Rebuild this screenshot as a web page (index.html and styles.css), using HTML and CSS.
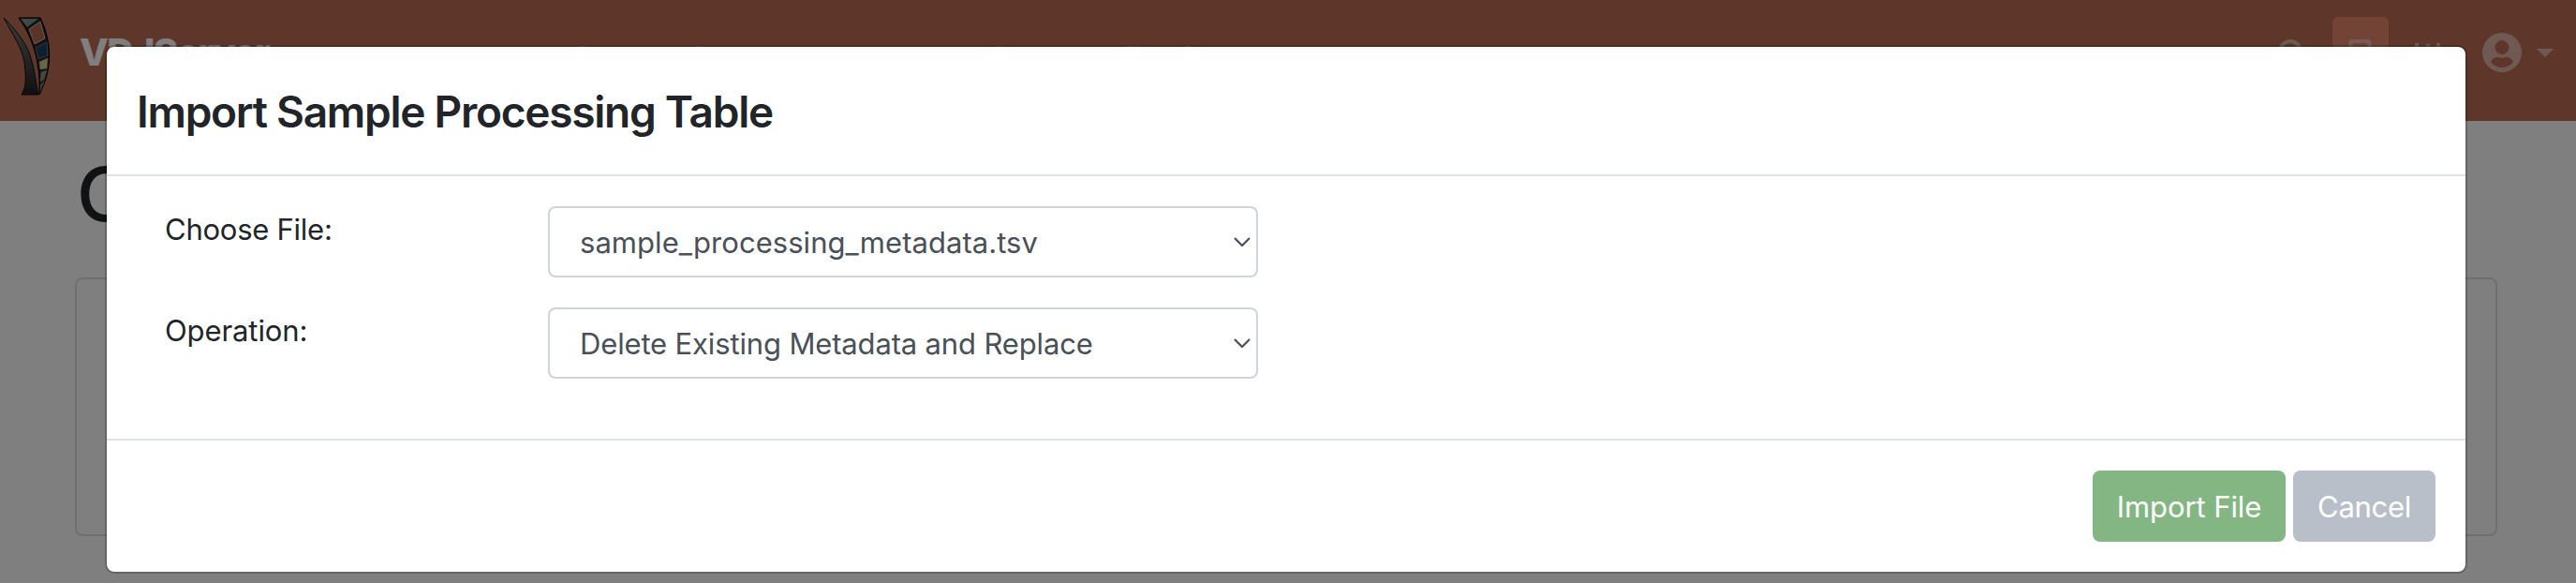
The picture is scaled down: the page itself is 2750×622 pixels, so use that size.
FILE: index.html
```html
<!DOCTYPE html>
<html lang="en">
<head>
<meta charset="utf-8">
<title>VDJServer</title>
<link rel="stylesheet" href="styles.css">
</head>
<body>
<div class="page">
  <header class="navbar">
    <svg class="logo" width="54" height="110" viewBox="0 0 54 110">
      <defs><linearGradient id="horn" x1="0" y1="0" x2="0" y2="1"><stop offset="0" stop-color="#777"/><stop offset=".4" stop-color="#555"/><stop offset="1" stop-color="#251f21"/></linearGradient></defs>
      <path d="M4 19C14 29 26 43 31 56C36 69 38 84 41 101H23C26 95 28 91 27 76C26 54 17 43 4 19Z" fill="url(#horn)" stroke="#111" stroke-width="1"/>
      <path d="M20 19H43C55 44 57 72 42 101C43 72 38 44 20 19Z" fill="#222" stroke="#000" stroke-width="1"/>
      <path d="M22 20H41L29 29Z" fill="#7a9688"/>
      <path d="M31 31L43 23L48 41L37 47Z" fill="#b4664c" stroke="#c9c0bb" stroke-width="1"/>
      <path d="M38 51L50 45L51 59L41 63Z" fill="#1d4058" stroke="#889" stroke-width=".7"/>
      <path d="M42 66L51 62L50 73L43 74Z" fill="#d8cc80" stroke="#a99" stroke-width=".7"/>
      <path d="M44 77L50 75L47 85L43 87Z" fill="#7a9688" stroke="#988" stroke-width=".6"/>
      <path d="M43 90L48 86L43 98Z" fill="#777"/>
    </svg>
    <span class="brand">VDJServer</span>
    <svg class="links" width="660" height="4" viewBox="0 0 660 4"><path d="M1 2H7M126 2H129M447 2H451M587 2H591M595 2H599M648 2H652" stroke="currentColor" stroke-width="2"/></svg>
    <nav class="tools">
      <svg width="32" height="32" viewBox="0 0 32 32" class="search"><circle cx="13" cy="13" r="11" fill="none" stroke="currentColor" stroke-width="4"/><path d="M21 21L30 30" stroke="currentColor" stroke-width="4"/></svg>
      <span class="tile"><svg width="26" height="26" viewBox="0 0 26 26"><rect x="2.5" y="2" width="20" height="20" rx="2" fill="none" stroke="currentColor" stroke-width="4"/></svg></span>
      <svg width="30" height="30" viewBox="0 0 30 30" class="sliders"><path d="M4 0V26M16 1V26M27 0V26" stroke="currentColor" stroke-width="4"/></svg>
      <svg width="42" height="42" viewBox="0 0 42 42" class="user"><path fill="currentColor" fill-rule="evenodd" d="M21 0A21 21 0 1 0 21 42A21 21 0 1 0 21 0ZM21 8A7.4 7.4 0 1 1 21 23A7.4 7.4 0 1 1 21 8ZM9 31C11 26 16 25 21 27C26 25 31 26 33 31C27 39 15 39 9 31Z"/></svg>
      <svg width="18" height="9" viewBox="0 0 18 9" class="caret"><path d="M0 0H18L9 9Z" fill="currentColor"/></svg>
    </nav>
  </header>
  <main class="content">
    <h1 class="heading">Community</h1>
    <div class="card"></div>
  </main>
</div>
<div class="backdrop">
  <section class="modal">
    <header class="modal-header"><h2 class="modal-title">Import Sample Processing Table</h2></header>
    <div class="modal-body">
      <div class="row"><span class="label label-file">Choose File:</span>
        <div class="select"><span class="file">sample_processing_metadata.tsv</span><svg width="18" height="10" viewBox="0 0 18 10"><path d="M1 1L9 9L17 1" fill="none" stroke="#495057" stroke-width="2.2"/></svg></div></div>
      <div class="row"><span class="label">Operation:</span>
        <div class="select"><span class="operation">Delete Existing Metadata and Replace</span><svg width="18" height="10" viewBox="0 0 18 10"><path d="M1 1L9 9L17 1" fill="none" stroke="#495057" stroke-width="2.2"/></svg></div></div>
    </div>
    <footer class="modal-footer"><button class="btn import">Import File</button><button class="btn cancel">Cancel</button></footer>
  </section>
</div>
</body>
</html>
```
FILE: styles.css
```css
* { box-sizing: border-box; }
body { margin: 0; width: 2750px; height: 622px; overflow: hidden; background: #fff; color: #212529; font-family: Inter, "Liberation Sans", sans-serif; font-size: 31px; line-height: 48px; }
.navbar { display: flex; height: 129px; background: #bf6e55; color: #fff; }
.logo { flex: none; }
.brand { flex: none; width: 250px; margin: 32px 0 0 31px; font-weight: 800; font-size: 40px; letter-spacing: -1.5px; }
.links { flex: none; margin: 48px 0 0 283px; color: rgba(255,255,255,.35); }
.tools { display: flex; align-items: flex-start; margin-left: auto; padding-right: 24px; color: rgba(255,255,255,.48); }
.search { margin-top: 42px; }
.tile { width: 60px; height: 76px; margin: 18px 0 0 26px; padding: 24px 17px; border-radius: 6px; background: #e6876a; color: rgb(240,184,166); line-height: 0; }
.sliders { margin: 46px 0 0 26px; }
.user { margin: 35px 0 0 44px; }
.caret { margin: 52px 0 0 16px; }
.content { padding: 30px 84px 0 80px; }
.heading { margin: 0 0 41px 2px; font-size: 80px; line-height: 96px; font-weight: 500; }
.card { height: 276px; border: 2px solid rgba(0,0,0,.125); border-radius: 8px; }
.backdrop { position: absolute; inset: 0; padding: 48px 116px 0 112px; background: rgba(0,0,0,.5); }
.modal { height: 564px; background: #fff; background-clip: padding-box; border: 2px solid rgba(0,0,0,.2); border-radius: 10px; }
.modal-header { height: 138px; padding: 40px 32px; border-bottom: 2px solid #dee2e6; }
.modal-title { margin: 0; font-size: 46px; line-height: 58px; font-weight: 600; letter-spacing: -1.25px; white-space: nowrap; }
.modal-body { height: 280px; padding: 32px 0 0 61px; }
.row { display: flex; height: 76px; margin-bottom: 32px; }
.label { width: 410px; padding: 1px 0 0 1px; letter-spacing: -0.1px; }
.label-file { letter-spacing: -0.25px; }
.select { display: flex; justify-content: space-between; align-items: center; width: 758px; height: 76px; padding: 0 6px 0 32px; border: 2px solid #ced4da; border-radius: 8px; color: #495057; white-space: nowrap; }
.select span { padding-top: 2px; }
.file { letter-spacing: 0.05px; }
.operation { letter-spacing: -0.15px; }
.modal-footer { display: flex; justify-content: flex-end; gap: 8px; padding: 32px; border-top: 2px solid #dee2e6; }
.btn { height: 76px; padding: 2px 0 0; border: 0; border-radius: 8px; color: #fff; font: inherit; white-space: nowrap; }
.import { width: 206px; background: #84b684; letter-spacing: -0.1px; }
.cancel { width: 152px; background: #b9bfc8; letter-spacing: -0.3px; }
```
